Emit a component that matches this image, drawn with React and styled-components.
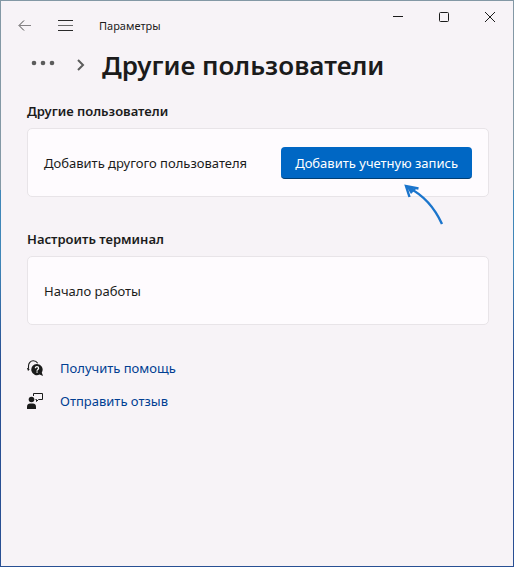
import React from "react";
import styled, { createGlobalStyle } from "styled-components";

const GlobalStyle = createGlobalStyle`
  * {
    box-sizing: border-box;
  }
  body {
    margin: 0;
    font-family: "Noto Sans", "Open Sans", sans-serif;
    font-size: 13px;
    line-height: 20px;
    color: #1b1b1b;
  }
`;

export default function App() {
  return (
    <>
      <GlobalStyle />
      <WindowFrame>
        <Window>
          <TitleBar>
            <NavButton type="button" aria-label="Назад">
              <BackIcon />
            </NavButton>
            <NavButton type="button" aria-label="Меню">
              <MenuIcon />
            </NavButton>
            <AppName>Параметры</AppName>
            <WindowControls>
              <ControlButton type="button" aria-label="Свернуть">
                <svg width="12" height="12" shapeRendering="crispEdges">
                  <path d="M1 5.5h10" stroke="currentColor" />
                </svg>
              </ControlButton>
              <ControlButton type="button" aria-label="Развернуть">
                <svg width="12" height="12" fill="none">
                  <rect x="1.5" y="1.5" width="9" height="9" rx="1" stroke="currentColor" />
                </svg>
              </ControlButton>
              <ControlButton type="button" aria-label="Закрыть">
                <svg width="12" height="12">
                  <path d="M1 1l10 10M11 1L1 11" stroke="currentColor" />
                </svg>
              </ControlButton>
            </WindowControls>
          </TitleBar>

          <Breadcrumb>
            <MoreButton type="button" aria-label="Показать путь">
              <svg width="24" height="6" fill="#5c5c5c">
                <circle cx="3" cy="3" r="2.3" />
                <circle cx="12" cy="3" r="2.3" />
                <circle cx="21" cy="3" r="2.3" />
              </svg>
            </MoreButton>
            <ChevronIcon />
            <PageTitle>Другие пользователи</PageTitle>
          </Breadcrumb>

          <Content>
            <Section>
              <SectionTitle>Другие пользователи</SectionTitle>
              <Card>
                <span>Добавить другого пользователя</span>
                <AccentButton type="button">Добавить учетную запись</AccentButton>
                <Pointer />
              </Card>
            </Section>

            <Section>
              <SectionTitle>Настроить терминал</SectionTitle>
              <Card>
                <span>Начало работы</span>
              </Card>
            </Section>

            <HelpLinks>
              <HelpLink href="#help">
                <HelpIcon />
                Получить помощь
              </HelpLink>
              <HelpLink href="#feedback">
                <FeedbackIcon />
                Отправить отзыв
              </HelpLink>
            </HelpLinks>
          </Content>
        </Window>
      </WindowFrame>
    </>
  );
}

const BackIcon = () => (
  <svg width="16" height="16" fill="none" stroke="#4a4a4a">
    <path d="M14 8.5H2.5" stroke="#858285" />
    <path d="M7 3.500l-5 5 5 5" />
  </svg>
);

const MenuIcon = () => (
  <svg width="16" height="16" stroke="#2a2a2a" shapeRendering="crispEdges">
    <path d="M1 3.5h15M1 13.5h15" />
    <path d="M1 8.5h15" stroke="#6a6a6a" />
  </svg>
);

const ChevronIcon = () => (
  <svg width="10" height="12" fill="none" stroke="#5c5c5c" strokeWidth="2">
    <path d="M1 1l5 5-5 5" />
  </svg>
);

const HelpIcon = () => (
  <svg width="16" height="16" fill="none">
    <path
      d="M1.500 8V6C1.500 3 3.500 .8 6.200 .8c2 0 3.600 1 4.500 2.500"
      stroke="#1b1b1b"
      strokeWidth="1.1"
    />
    <path d="M0 8h1.600l1 1.500L1 11z" fill="#1b1b1b" />
    <path
      d="M10 4a5.600 5.600 0 1 0 2.600 10.500L16 16l-1.200-3.500A5.600 5.600 0 0 0 10 4z"
      fill="#1b1b1b"
    />
    <path d="M8.400 8.200c0-2 3.200-2 3.200 0 0 1.200-1.600 1.200-1.600 2.500" stroke="#fff" strokeWidth="1.3" />
    <rect x="9.400" y="11.400" width="1.300" height="1.300" fill="#fff" />
  </svg>
);

const FeedbackIcon = () => (
  <svg width="16" height="16" fill="none">
    <circle cx="4.500" cy="6.500" r="2.800" fill="#1b1b1b" />
    <path d="M0 16v-2.500C0 11.500 1.500 10.500 3 10.500h3c1.500 0 3 1 3 3V16z" fill="#1b1b1b" />
    <path d="M6.500 3V.5h9v6h-4l-2 2v-2H8.500" stroke="#1b1b1b" />
  </svg>
);

const Pointer = () => (
  <PointerSvg viewBox="0 0 40 42" aria-hidden="true">
    <path d="M38 40C32 27 21 12 5 4" />
    <path d="M14.500 4.500L2 2l3.500 11" />
    <path d="M2 2l10 3-5 5z" fill="#1b75cc" stroke="none" />
  </PointerSvg>
);

const WindowFrame = styled.div`
  display: flex;
  min-height: 100vh;
  padding: 1px;
  background: linear-gradient(#8398a5 0 190px, #3f86b8 190px 260px, #284f93 360px);
`;

const Window = styled.main`
  flex: 1;
  min-width: 0;
  background: #f7f3f7;
`;

const TitleBar = styled.header`
  display: flex;
  align-items: flex-start;
  height: 44px;
  padding-left: 4px;
`;

const PlainButton = styled.button`
  display: flex;
  align-items: center;
  justify-content: center;
  padding: 0;
  border: 0;
  background: none;
  color: #1b1b1b;
`;

const NavButton = styled(PlainButton)`
  width: 40px;
  height: 48px;
`;

const AppName = styled.span`
  padding: 16px 0 0 14px;
  font-size: 11px;
  line-height: 18px;
`;

const WindowControls = styled.div`
  display: flex;
  margin-left: auto;
`;

const ControlButton = styled(PlainButton)`
  width: 46px;
  height: 32px;
`;

const Breadcrumb = styled.div`
  display: flex;
  align-items: center;
  height: 40px;
  padding-left: 30px;
`;

const MoreButton = styled(PlainButton)`
  height: 24px;
  margin: 0 22px 4px 0;
`;

const PageTitle = styled.h1`
  margin: 0 0 0 15px;
  font-size: 26px;
  font-weight: 600;
  line-height: 36px;
  white-space: nowrap;
`;

const Content = styled.div`
  padding: 16px 24px 24px 26px;
`;

const Section = styled.section`
  margin-bottom: 32px;
`;

const SectionTitle = styled.h2`
  margin: 0;
  padding-bottom: 7px;
  font-size: 13px;
  font-weight: 600;
  line-height: 20px;
`;

const Card = styled.div`
  position: relative;
  display: flex;
  align-items: center;
  justify-content: space-between;
  min-height: 69px;
  padding: 1px 16px 0;
  border: 1px solid #e8e4e8;
  border-radius: 5px;
  background: #fefbfe;
`;

const AccentButton = styled.button`
  height: 32px;
  padding: 0 14px;
  border: 0;
  border-bottom: 1px solid #003e73;
  border-radius: 4px;
  background: #0067c4;
  color: #fff;
  font: inherit;
`;

const PointerSvg = styled.svg`
  position: absolute;
  top: 55px;
  right: 44px;
  width: 40px;
  height: 42px;
  fill: none;
  stroke: #1b75cc;
  stroke-width: 2.4;
`;

const HelpLinks = styled.nav`
  display: flex;
  flex-direction: column;
  gap: 13px;
  padding-top: 1px;
`;

const HelpLink = styled.a`
  display: flex;
  align-items: center;
  gap: 17px;
  color: #003e92;
  text-decoration: none;
`;
